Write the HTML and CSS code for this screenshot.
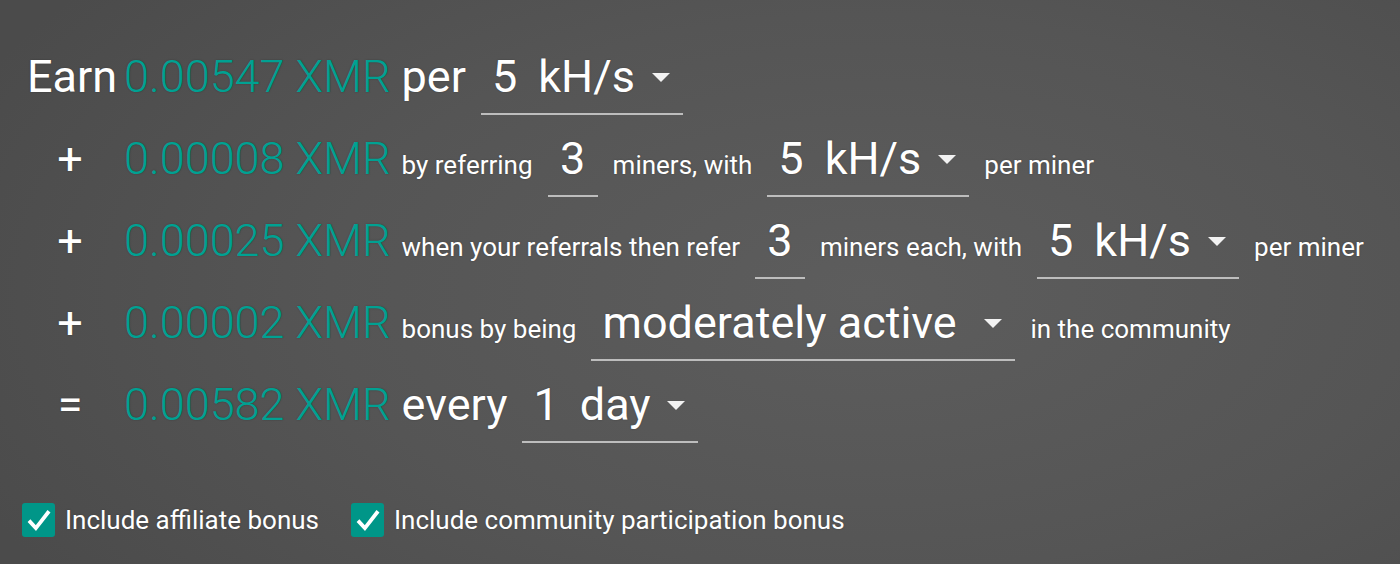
FILE: index.html
```html
<!DOCTYPE html>
<html lang="en">
<head>
  <meta charset="UTF-8">
  <title>Mining Calculator</title>
  <link rel="stylesheet" href="styles.css">
</head>
<body>
  <div class="calc">
    <div class="row">
      <span class="lead">Earn</span>
      <span class="amount">0.00547 XMR</span>
      <span class="word">per</span>
      <span class="select rate"><span class="val">5</span><span>kH/s</span><svg class="caret" viewBox="0 0 18 9"><polygon points="0,0 18,0 9,9"/></svg></span>
    </div>

    <div class="row">
      <span class="lead">+</span>
      <span class="amount">0.00008 XMR</span>
      <span class="note">by referring</span>
      <span class="select count"><span>3</span></span>
      <span class="note">miners, with</span>
      <span class="select rate"><span class="val">5</span><span>kH/s</span><svg class="caret" viewBox="0 0 18 9"><polygon points="0,0 18,0 9,9"/></svg></span>
      <span class="note">per miner</span>
    </div>

    <div class="row">
      <span class="lead">+</span>
      <span class="amount">0.00025 XMR</span>
      <span class="note">when your referrals then refer</span>
      <span class="select count"><span>3</span></span>
      <span class="note">miners each, with</span>
      <span class="select rate"><span class="val">5</span><span>kH/s</span><svg class="caret" viewBox="0 0 18 9"><polygon points="0,0 18,0 9,9"/></svg></span>
      <span class="note">per miner</span>
    </div>

    <div class="row">
      <span class="lead">+</span>
      <span class="amount">0.00002 XMR</span>
      <span class="note">bonus by being</span>
      <span class="select activity"><span>moderately active</span><svg class="caret" viewBox="0 0 18 9"><polygon points="0,0 18,0 9,9"/></svg></span>
      <span class="note">in the community</span>
    </div>

    <div class="row">
      <span class="lead">=</span>
      <span class="amount">0.00582 XMR</span>
      <span class="word">every</span>
      <span class="select period"><span class="val">1</span><span>day</span><svg class="caret" viewBox="0 0 18 9"><polygon points="0,0 18,0 9,9"/></svg></span>
    </div>
  </div>

  <div class="options">
    <label class="check">
      <span class="box"><svg viewBox="0 0 24 24"><polyline points="4,12.5 9.5,18.5 20,5"/></svg></span>
      Include affiliate bonus
    </label>
    <label class="check">
      <span class="box"><svg viewBox="0 0 24 24"><polyline points="4,12.5 9.5,18.5 20,5"/></svg></span>
      Include community participation bonus
    </label>
  </div>
</body>
</html>
```

FILE: styles.css
```css
/* Page */
html, body {
  height: 100%;
  margin: 0;
}

body {
  font-family: Roboto, "Liberation Sans", sans-serif;
  color: #fff;
  background: radial-gradient(ellipse 70% 90% at 62% 52%, #5d5d5d 0%, #555 55%, #4b4b4b 100%);
  background-color: #4f4f4f;
  padding: 50px 0 0 27px;
  box-sizing: border-box;
  text-shadow: 0 0 2px rgba(0, 0, 0, 0.25);
}

/* Calculator rows */
.calc {
  display: flex;
  flex-direction: column;
  gap: 17px;
}

.row {
  display: flex;
  align-items: baseline;
  gap: 11px;
  font-size: 45px;
  line-height: 54px;
}

.lead {
  width: 86px;
  text-align: center;
}

.amount {
  color: #00a192;
  font-weight: 300;
}

.note {
  font-size: 26px;
}

/* Dropdowns */
.select {
  display: inline-flex;
  align-items: baseline;
  box-sizing: border-box;
  margin: 0 4px;
  padding: 0 13px 9px 11px;
  border-bottom: 2px solid #bdbdbd;
}

.select .val {
  margin-right: 21px;
}

.caret {
  width: 18px;
  height: 9px;
  margin-left: auto;
  align-self: center;
  fill: #f2f2f2;
}

.rate { width: 202px; }
.count { width: 50px; padding: 0 0 9px; justify-content: center; }
.activity { width: 424px; }
.period { width: 176px; }

/* Checkboxes */
.options {
  display: flex;
  gap: 32px;
  margin-top: 60px;
  margin-left: -5px;
  font-size: 26px;
}

.check {
  display: flex;
  align-items: center;
  gap: 10px;
}

.box {
  width: 33px;
  height: 34px;
  background: #009688;
  border-radius: 3px;
  display: flex;
  align-items: center;
  justify-content: center;
}

.box svg {
  width: 30px;
  height: 30px;
  fill: none;
  stroke: #fff;
  stroke-width: 3;
}
```
